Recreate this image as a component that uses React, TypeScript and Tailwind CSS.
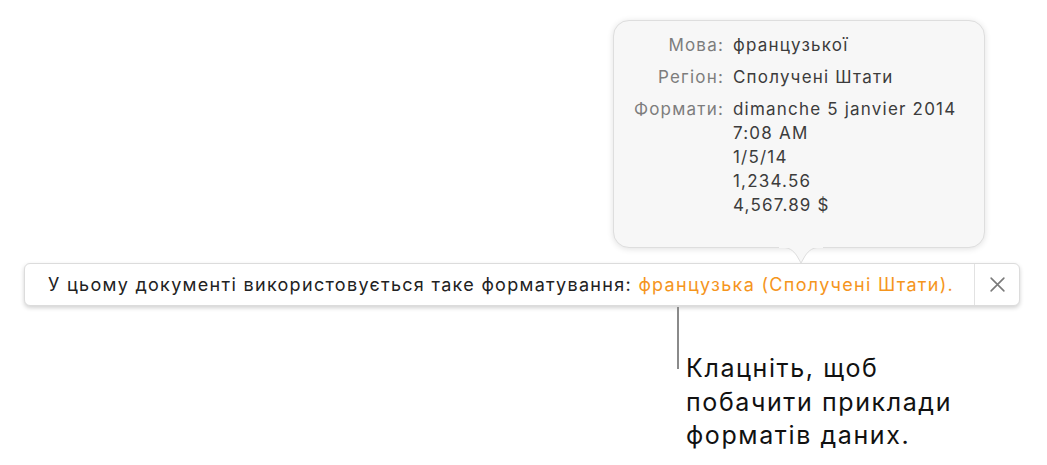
import React from "react";

export default function App() {
  const font = { fontFamily: "Inter, 'Noto Sans', sans-serif" };
  return (
    <div className="relative w-[1047px] h-[465px] bg-white overflow-hidden" style={font}>
      {/* bar */}
      <div className="pt-[263px] pl-[24px]">
        <div className="w-[996px] h-[43px] rounded-[6px] border border-[#dcdcdc] bg-white shadow-[0_2px_4px_rgba(0,0,0,0.18)] flex items-center">
          <div className="flex-1 pl-[23px] text-[18px] text-[#222] tracking-[1.3px] whitespace-nowrap">
            У цьому документі використовується таке форматування:{" "}
            <span className="text-[#f5951d]">французька (Сполучені Штати).</span>
          </div>
          <div className="w-[45px] h-full border-l border-[#e2e2e2] flex items-center justify-center">
            <svg width="17" height="17" viewBox="0 0 16 16" fill="none" stroke="#7a7a7a" strokeWidth="1.5" strokeLinecap="round">
              <path d="M2 2L14 14M14 2L2 14" />
            </svg>
          </div>
        </div>
        {/* callout */}
        <div className="flex ml-[653px]">
          <div className="w-[2px] h-[62px] bg-[#8a8a8a] mt-[1px]" />
          <div className="ml-[7px] mt-[46px] text-[25px] leading-[33.5px] tracking-[1.6px] text-[#111]">
            Клацніть, щоб
            <br />
            побачити приклади
            <br />
            форматів даних.
          </div>
        </div>
      </div>

      {/* popover */}
      <div className="absolute left-[613px] top-[20px] w-[372px] h-[228px]">
        <div className="absolute inset-0 rounded-[16px] bg-[#f7f7f7] border border-[#dedede] shadow-[0_1px_6px_rgba(0,0,0,0.12)]" />
        <svg className="absolute left-[166px] top-[226px]" width="44" height="20" viewBox="0 0 44 20">
          <path d="M0 1 C10 1 14 4 18 10 L22 17 L26 10 C30 4 34 1 44 1 Z" fill="#f7f7f7" stroke="#dedede" strokeWidth="1" />
          <rect x="0" y="0" width="44" height="2" fill="#f7f7f7" />
        </svg>
        <div className="relative pt-[13px] text-[17px] leading-[24px] tracking-[1.2px]">
          <div className="grid grid-cols-[111px_1fr] gap-x-[9px] gap-y-[8px]">
            <div className="text-right text-[#7d7d7d]">Мова:</div>
            <div className="text-[#3c3c3c]">французької</div>
            <div className="text-right text-[#7d7d7d]">Регіон:</div>
            <div className="text-[#3c3c3c]">Сполучені Штати</div>
            <div className="text-right text-[#7d7d7d]">Формати:</div>
            <div className="text-[#3c3c3c]">
              <div>dimanche 5 janvier 2014</div>
              <div>7:08 AM</div>
              <div>1/5/14</div>
              <div>1,234.56</div>
              <div>4,567.89 $</div>
            </div>
          </div>
        </div>
      </div>
    </div>
  );
}
